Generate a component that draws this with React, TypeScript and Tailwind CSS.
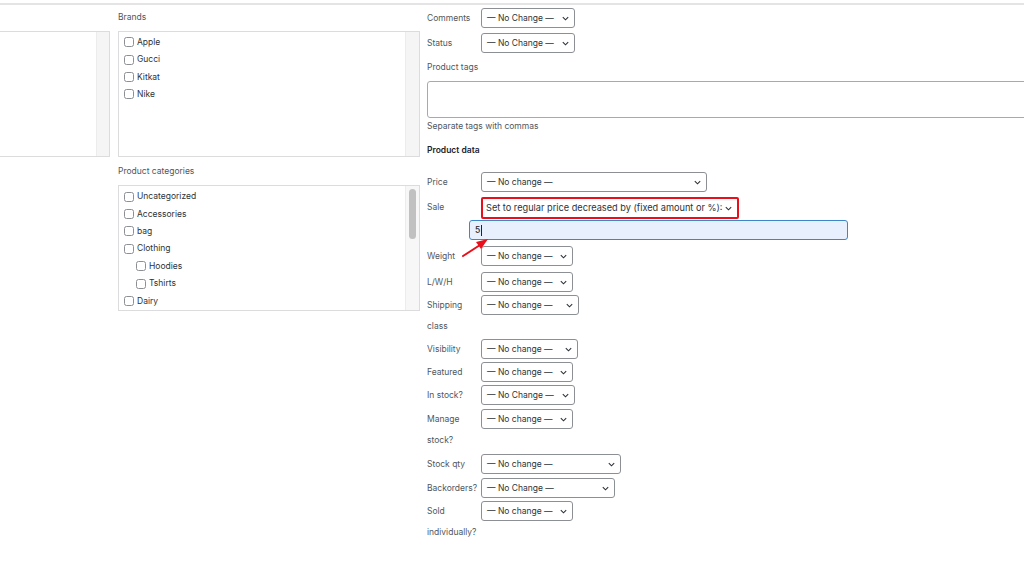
import React from 'react';

const font = { fontFamily: 'Inter, "Liberation Sans", Arial, sans-serif' };

function Chevron() {
  return (
    <svg width="7" height="5" viewBox="0 0 7 5" className="shrink-0">
      <path d="M0.8 1.1 L3.5 3.8 L6.2 1.1" fill="none" stroke="#2c3338" strokeWidth="1.1" />
    </svg>
  );
}

function Checkbox({ label, indent }: { label: string; indent?: boolean }) {
  return (
    <div className={`flex h-[17.4px] items-center gap-[3px] ${indent ? 'pl-[17px]' : 'pl-[5px]'}`}>
      <span className="h-[10px] w-[10px] shrink-0 rounded-[2.5px] border border-[#8c8f94] bg-white" />
      <span className="text-[8.5px] text-[#2c3338]">{label}</span>
    </div>
  );
}

function Select({ text, className }: { text: string; className: string }) {
  return (
    <div
      className={`flex h-[20px] items-center justify-between rounded-[3px] border border-[#8c8f94] bg-white pl-[5px] pr-[5px] text-[8.5px] text-[#2c3338] ${className}`}
    >
      <span className="whitespace-nowrap">{text}</span>
      <Chevron />
    </div>
  );
}

type Row = { label: string[]; text: string; w: string; mt: string };

const lowerRows: Row[] = [
  { label: ['Weight'], text: '— No change —', w: 'w-[92px]', mt: 'mt-[6px]' },
  { label: ['L/W/H'], text: '— No change —', w: 'w-[92px]', mt: 'mt-[5px]' },
  { label: ['Shipping', 'class'], text: '— No change —', w: 'w-[98px]', mt: 'mt-[2px]' },
  { label: ['Visibility'], text: '— No change —', w: 'w-[97px]', mt: 'mt-[2px]' },
  { label: ['Featured'], text: '— No change —', w: 'w-[92px]', mt: 'mt-[2px]' },
  { label: ['In stock?'], text: '— No Change —', w: 'w-[94px]', mt: 'mt-[2px]' },
  { label: ['Manage', 'stock?'], text: '— No change —', w: 'w-[92px]', mt: 'mt-[3px]' },
  { label: ['Stock qty'], text: '— No change —', w: 'w-[140px]', mt: 'mt-[3px]' },
  { label: ['Backorders?'], text: '— No Change —', w: 'w-[134px]', mt: 'mt-[3px]' },
  { label: ['Sold', 'individually?'], text: '— No change —', w: 'w-[92px]', mt: 'mt-[2px]' },
];

function FieldRow({ row }: { row: Row }) {
  return (
    <div className={`flex items-start ${row.mt}`}>
      <div className="w-[54px] shrink-0 whitespace-nowrap text-[8.5px] leading-[21px] text-[#50575e]">
        {row.label.map((l) => (
          <div key={l}>{l}</div>
        ))}
      </div>
      <Select text={row.text} className={row.w} />
    </div>
  );
}

export default function App() {
  const brands = ['Apple', 'Gucci', 'Kitkat', 'Nike'];
  const categories: [string, boolean][] = [
    ['Uncategorized', false],
    ['Accessories', false],
    ['bag', false],
    ['Clothing', false],
    ['Hoodies', true],
    ['Tshirts', true],
    ['Dairy', false],
  ];

  return (
    <div className="relative h-[564px] w-[1024px] overflow-hidden bg-white" style={font}>
      <div className="mt-[3px] h-[2px] w-full bg-[#e4e4e4]" />

      <div className="flex">
        {/* left list (cut off) */}
        <div className="w-[110px] shrink-0">
          <div className="mt-[26px] flex h-[126px] justify-end border-y border-r border-[#dcdcde] bg-white">
            <div className="w-[13px] border-l border-[#ececec] bg-[#f5f5f5]" />
          </div>
        </div>

        {/* taxonomy column */}
        <div className="ml-[8px] w-[302px] shrink-0">
          <div className="mt-[6px] text-[8.5px] leading-[12px] text-[#50575e]">Brands</div>
          <div className="mt-[8px] flex h-[126px] border border-[#dcdcde]">
            <div className="flex-1 pt-[1.5px]">
              {brands.map((b) => (
                <Checkbox key={b} label={b} />
              ))}
            </div>
            <div className="w-[14px] border-l border-[#ececec] bg-[#f5f5f5]" />
          </div>

          <div className="mt-[8px] text-[8.5px] leading-[12px] text-[#50575e]">Product categories</div>
          <div className="mt-[8px] flex h-[126px] border border-[#dcdcde]">
            <div className="flex-1 pt-[2px]">
              {categories.map(([c, indent]) => (
                <Checkbox key={c} label={c} indent={indent} />
              ))}
            </div>
            <div className="flex w-[14px] justify-center border-l border-[#ececec] bg-[#f7f7f7] pt-[3px]">
              <div className="h-[50px] w-[7px] rounded-full bg-[#c1c1c1]" />
            </div>
          </div>
        </div>

        {/* bulk edit fields */}
        <div className="ml-[7px] flex-1">
          <div className="mt-[3px] flex items-start">
            <div className="w-[54px] text-[8.5px] leading-[20px] text-[#50575e]">Comments</div>
            <Select text="— No Change —" className="w-[94px]" />
          </div>
          <div className="mt-[5px] flex items-start">
            <div className="w-[54px] text-[8.5px] leading-[20px] text-[#50575e]">Status</div>
            <Select text="— No Change —" className="w-[94px]" />
          </div>

          <div className="mt-[8px] text-[8.5px] leading-[12px] text-[#50575e]">Product tags</div>
          <div className="mt-[8px] h-[37px] w-[620px] rounded-[3px] border border-[#a7aaad] bg-white" />
          <div className="mt-[2px] text-[8.5px] leading-[12px] text-[#50575e]">Separate tags with commas</div>
          <div className="mt-[12px] text-[8.5px] font-semibold leading-[12px] text-[#1d2327]">Product data</div>

          <div className="mt-[16px] flex items-start">
            <div className="w-[54px] text-[8.5px] leading-[21px] text-[#50575e]">Price</div>
            <Select text="— No change —" className="w-[226px]" />
          </div>
          <div className="mt-[4px] flex items-start">
            <div className="w-[54px] text-[8.5px] leading-[20px] text-[#50575e]">Sale</div>
            <div className="flex h-[22px] w-[258px] items-center justify-between rounded-[2px] border-2 border-[#e8101a] bg-white pl-[3px] pr-[5px] text-[9.2px] text-[#2c3338]">
              <span className="whitespace-nowrap">Set to regular price decreased by (fixed amount or %):</span>
              <Chevron />
            </div>
          </div>
          <div className="ml-[42px] mt-[1px] flex h-[20px] w-[379px] items-center rounded-[3px] border-[1.5px] border-[#3d87c9] bg-[#e8f0fe] pl-[5px] text-[8.5px] font-medium text-[#1d2327]">
            5<span className="ml-[1px] h-[11px] w-px bg-[#1d2327]" />
          </div>

          {lowerRows.map((r) => (
            <FieldRow key={r.label[0]} row={r} />
          ))}
        </div>
      </div>

      {/* annotation arrow */}
      <svg className="absolute left-[460px] top-[233px]" width="34" height="28" viewBox="0 0 34 28">
        <line x1="3" y1="23" x2="20" y2="12" stroke="#e8101a" strokeWidth="2" strokeLinecap="round" />
        <polygon points="28,6 16,9 21,16" fill="#e8101a" />
      </svg>
    </div>
  );
}
